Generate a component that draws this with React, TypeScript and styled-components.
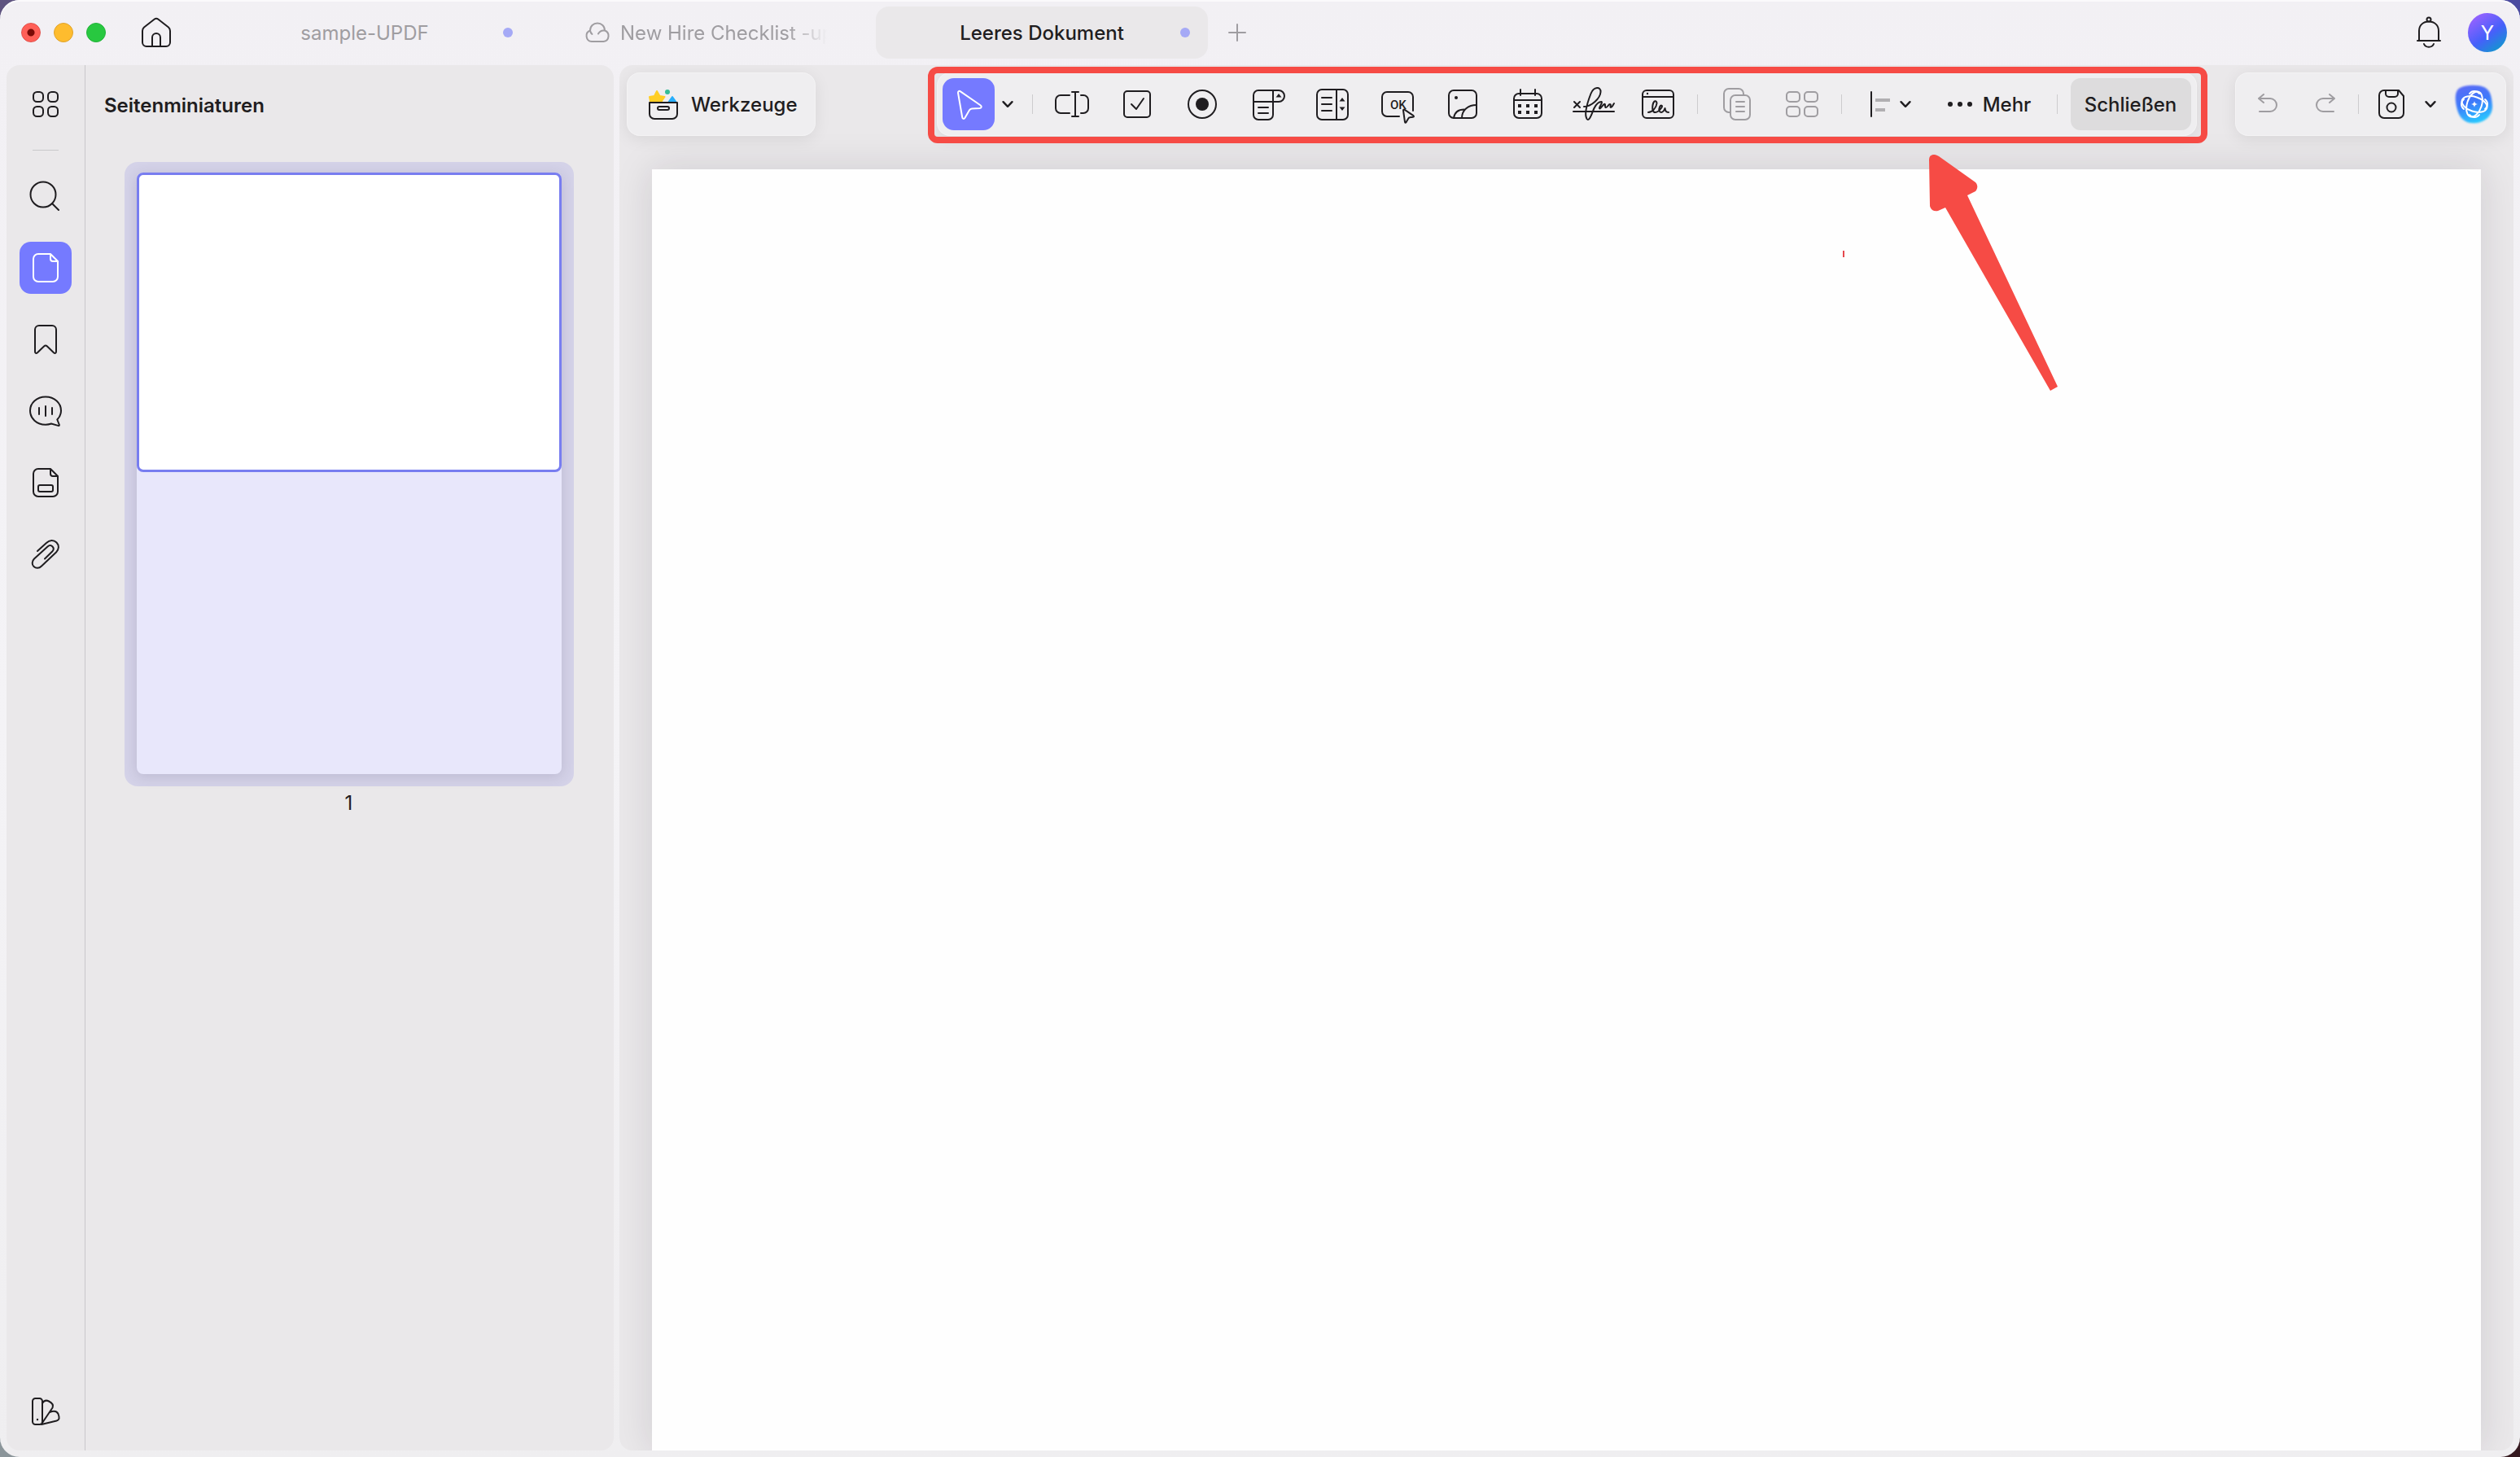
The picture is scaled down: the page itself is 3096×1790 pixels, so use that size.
import React from 'react';
import styled, { createGlobalStyle, css } from 'styled-components';

const ink = '#1f1d20';
const muted = '#9f9da1';
const accent = '#757aff';
const red = '#f64b45';

const GlobalStyle = createGlobalStyle`
  * { box-sizing: border-box; }
  body {
    margin: 0;
    background:
      linear-gradient(90deg, #5f5480, #4b4ba0) top / 100% 50% no-repeat,
      linear-gradient(90deg, #8b959a, #35191f) bottom / 100% 50% no-repeat;
    font-family: Inter, "Liberation Sans", sans-serif;
    font-size: 24px;
    line-height: 32px;
    color: ${ink};
  }
  button { font: inherit; color: inherit; border: 0; padding: 0; background: none; }
`;

const Window = styled.div`
  height: 100vh;
  display: flex;
  flex-direction: column;
  overflow: hidden;
  border-radius: 24px;
  background: linear-gradient(#f2f0f4, #f4f3f6 50%, #efeef0);
  box-shadow: inset 0 2px 0 #fbfafc;
`;

const TitleBar = styled.header`
  display: flex;
  align-items: center;
  flex: none;
  height: 80px;
  padding: 0 16px 0 26px;
`;

const Lights = styled.div`
  display: flex;
  gap: 16px;
  margin-right: 34px;
`;

const Light = styled.button<{ $color: string; $edge: string; $dot?: boolean }>`
  width: 24px;
  height: 24px;
  border-radius: 50%;
  border: 1px solid ${p => p.$edge};
  background: ${p => (p.$dot ? `radial-gradient(#7a0a06 0 4px, ${p.$color} 5px)` : p.$color)};
`;

const IconButton = styled.button<{ $w?: number; $active?: boolean }>`
  display: flex;
  align-items: center;
  justify-content: center;
  flex: none;
  width: ${p => p.$w ?? 64}px;
  height: 64px;
  border-radius: ${p => (p.$active ? 14 : 0)}px;
  background: ${p => (p.$active ? accent : 'none')};
  color: ${p => (p.$active ? '#fff' : ink)};
  &:disabled { color: ${muted}; }
`;

const Label = styled.span`
  display: block;
  padding-top: 2px;
  white-space: nowrap;
`;

const Tabs = styled.div`
  display: flex;
  gap: 8px;
  flex: 1;
  margin-left: 24px;
`;

const Tab = styled.button<{ $active?: boolean }>`
  display: grid;
  grid-template-columns: 48px minmax(0, 1fr) 48px;
  align-items: center;
  justify-items: center;
  width: 408px;
  height: 64px;
  padding: 0 4px;
  border-radius: 16px;
  color: ${p => (p.$active ? ink : muted)};
  background: ${p => (p.$active ? '#eae8ea' : 'none')};
  font-weight: ${p => (p.$active ? 500 : 400)};
`;

const CloudTab = styled(Tab)`
  display: flex;
  gap: 10px;
  padding: 0 56px;
`;

const Fading = styled(Label)`
  mask-image: linear-gradient(90deg, #000 205px, transparent 254px);
`;

const Dot = styled.span`
  width: 12px;
  height: 12px;
  border-radius: 50%;
  background: #a5a9f6;
`;

const Avatar = styled.button`
  width: 48px;
  height: 48px;
  margin-left: 16px;
  border-radius: 50%;
  color: #fff;
  background: linear-gradient(145deg, #9a62ff 10%, #4660fa 55%, #0aa0c8 95%);
`;

const Body = styled.div`
  display: flex;
  flex: 1;
  min-height: 0;
  gap: 7px;
  padding: 0 8px 8px;
`;

const panel = css`
  border-radius: 16px;
  background: #eae8ea;
  overflow: hidden;
`;

const SidePanel = styled.aside`
  ${panel}
  display: flex;
  width: 746px;
  flex: none;
`;

const Rail = styled.nav`
  display: flex;
  flex-direction: column;
  align-items: center;
  gap: 24px;
  width: 97px;
  padding: 16px 0;
  border-right: 1px solid #c9c8cb;
`;

const RailRule = styled.hr`
  width: 32px;
  height: 1px;
  margin: 0;
  border: 0;
  background: #c9c8cb;
`;

const RailEnd = styled.div`
  margin-top: auto;
`;

const Thumbs = styled.section`
  display: flex;
  flex-direction: column;
  flex: 1;
  align-items: center;
  padding: 32px 49px 0 23px;
`;

const Heading = styled.h2`
  align-self: flex-start;
  margin: 0 0 53px;
  font-size: 24px;
  line-height: 32px;
  font-weight: 600;
`;

const ThumbCard = styled.button`
  width: 552px;
  height: 767px;
  margin-left: 24px;
  padding: 13px 15px 15px;
  border-radius: 16px;
  background: #d4d2e8;
`;

const ThumbPage = styled.span`
  display: block;
  height: 100%;
  border-radius: 8px;
  background: #e8e7fb;
  box-shadow: 0 3px 16px rgba(60, 55, 90, 0.16);
`;

const ThumbView = styled.span`
  display: block;
  height: 368px;
  border: 3px solid #787df0;
  border-radius: 8px;
  background: #fff;
`;

const PageNumber = styled.div`
  margin: 5px 0 0 24px;
`;

const Main = styled.main`
  ${panel}
  display: flex;
  flex-direction: column;
  flex: 1;
  min-width: 0;
  padding: 9px 9px 0;
`;

const ToolRow = styled.div`
  display: grid;
  grid-template-columns: 1fr auto 1fr;
  position: relative;
  z-index: 1;
`;

const Card = styled.div`
  display: flex;
  align-items: center;
  height: 78px;
  padding: 7px;
  border-radius: 16px;
  background: #efeef0;
  box-shadow: 0 4px 20px rgba(0, 0, 0, 0.08), inset 0 0 0 1px rgba(255, 255, 255, 0.3);
`;

const StartCard = styled(Card)` justify-self: start; `;
const EndCard = styled(Card)` justify-self: end; `;
const FormBar = styled(Card)` position: relative; `;

const ToolsButton = styled.button`
  display: flex;
  align-items: center;
  gap: 15px;
  width: 218px;
  height: 64px;
  padding-left: 19px;
  font-weight: 500;
`;

const AlignButton = styled.button`
  display: flex;
  align-items: center;
  width: 90px;
  height: 64px;
  padding-left: 15px;
`;

const MoreButton = styled.button`
  display: flex;
  align-items: center;
  justify-content: center;
  gap: 12px;
  width: 158px;
  height: 64px;
  padding-left: 8px;
  font-weight: 500;
`;

const CloseButton = styled.button`
  width: 148px;
  height: 64px;
  border-radius: 12px;
  background: #dddcdd;
  font-weight: 500;
`;

const Rule = styled.span<{ $before?: number; $after?: number }>`
  width: 1px;
  height: 24px;
  flex: none;
  margin: 0 ${p => p.$after ?? 8}px 0 ${p => p.$before ?? 8}px;
  background: #cdccce;
`;

const Highlight = styled.div`
  position: absolute;
  inset: -7px -13px -9px -11px;
  border: 8px solid ${red};
  border-radius: 12px;
  pointer-events: none;
`;

const Arrow = styled.svg`
  position: absolute;
  left: 1219px;
  top: 101px;
  pointer-events: none;
`;

const Canvas = styled.div`
  position: relative;
  flex: 1;
  margin: 41px 31px 0;
  background: #fefefe;
  box-shadow: 0 0 44px rgba(30, 20, 40, 0.13);
`;

const Caret = styled.span`
  position: absolute;
  left: 1463px;
  top: 100px;
  width: 2px;
  height: 8px;
  background: #e5484d;
`;

const Glyph = styled.svg`
  display: block;
  flex: none;
  overflow: visible;
  fill: none;
  stroke: currentColor;
  stroke-width: 2;
  stroke-linecap: round;
  stroke-linejoin: round;
`;

const Solid = styled.g`
  fill: currentColor;
  stroke: none;
`;

const Icon = ({ size = 48, children }: { size?: number; children: React.ReactNode }) => (
  <Glyph width={size} height={size} viewBox="0 0 48 48" aria-hidden="true">{children}</Glyph>
);

const Chevron = () => (
  <Glyph width="14" height="8" viewBox="0 0 14 8" aria-hidden="true"><path strokeWidth="2.4" d="M1.5 1.2 7 6.8l5.500-5.600" /></Glyph>
);

const GridIcon = () => (
  <Icon>
    <rect x="9" y="9" width="12" height="12" rx="4.500" /><rect x="27" y="9" width="12" height="12" rx="4.500" />
    <rect x="9" y="27" width="12" height="12" rx="4.500" /><rect x="27" y="27" width="12" height="12" rx="4.500" />
  </Icon>
);

const pageOutline = 'M15 7h15l9 9v19a6 6 0 0 1-6 6H15a6 6 0 0 1-6-6V13a6 6 0 0 1 6-6ZM30 7v6a3 3 0 0 0 3 3h6';

const railIcons: { label: string; active?: boolean; art: React.ReactNode }[] = [
  { label: 'Suche', art: <><circle cx="21" cy="22" r="15.500" /><path d="m32 33 8 8" /></> },
  { label: 'Seitenminiaturen', active: true, art: <path d={pageOutline} /> },
  { label: 'Lesezeichen', art: <path d="M11 39V12a5 5 0 0 1 5-5h16a5 5 0 0 1 5 5v27c0 2-1.500 2.500-3 1.200L26 32.500c-1.300-1.200-2.700-1.200-4 0l-8 7.700c-1.500 1.300-3 .8-3-1.200Z" /> },
  { label: 'Kommentare', art: <><path d="M24 6.500c11 0 19 7.500 19 17 0 4.500-1.700 8-4.700 11l2.400 6c.4 1.200-.2 1.700-1.400 1.400L31 39.500c-2.300.8-4.500 1.200-7 1.200-11 0-19-7.700-19-17.200s8-17 19-17Z" /><path d="M16 20v8M24 18v12M32 20v8" /></> },
  { label: 'Felder', art: <><path d={pageOutline} /><rect x="15" y="27" width="18" height="8" rx="2" /></> },
  { label: 'Anhänge', art: <path d="m14 20 11-10c4-4 9-4 12.500-.5s3 8.500-.5 12L19 38.500c-3 3-7 3-9.500.5s-2.500-6.500.5-9.500l16.500-15c2-1.800 4.300-1.800 6 0s1.600 4-.3 6L23 29.500" /> },
];

const fieldIcons: { label: string; art: React.ReactNode }[] = [
  { label: 'Textfeld', art: <path d="M21 13H10a6 6 0 0 0-6 6v10a6 6 0 0 0 6 6h11M35 13h3a6 6 0 0 1 6 6v10a6 6 0 0 1-6 6h-3M28 9v30M24 9h8M24 39h8" /> },
  { label: 'Kontrollkästchen', art: <><rect x="8" y="8" width="32" height="32" rx="4" /><path d="m17 24 6 6 9-13" /></> },
  { label: 'Optionsfeld', art: <><circle cx="24" cy="24" r="17" /><Solid><circle cx="24" cy="24" r="8" /></Solid></> },
  { label: 'Dropdown', art: <><path d="M31 7v30a6 6 0 0 1-6 6H13a6 6 0 0 1-6-6V13a6 6 0 0 1 6-6h25a7 7 0 0 1 0 14H7M13 28h12M13 35h12" /><Solid><path d="m38 11 3.500 4.500h-7Z" /></Solid></> },
  { label: 'Listenfeld', art: <><rect x="5" y="6" width="38" height="37" rx="6" /><path d="M29 6v37M11 16h12M11 24h12M11 32h12" /><Solid><path d="m36 16 3.500 4.500h-7ZM36 32l3.500-4.500h-7Z" /></Solid></> },
  { label: 'Schaltfläche', art: <><path d="M26 39H11a6 6 0 0 1-6-6V15a6 6 0 0 1 6-6h26a6 6 0 0 1 6 6v17" /><Solid><text x="15" y="30" fontSize="15" fontWeight="500" fontFamily="Roboto, sans-serif">OK</text></Solid><path fill="#efeef0" d="M31 31.500c0-1 .7-1.300 1.500-.8l11 7.500c.9.700.6 1.500-.5 1.600l-4 .4c-.6 0-1 .4-1.400.9l-3 5c-.6.900-1.400.800-1.600-.3Z" /></> },
  { label: 'Bild', art: <><rect x="7" y="7" width="34" height="34" rx="6" /><path d="M23 41c0-10 8-16 18-16M13 41c1-7 6-10.500 13-10.500" /><Solid><circle cx="16" cy="16" r="2" /></Solid></> },
  { label: 'Datum', art: <><rect x="7" y="11" width="34" height="30" rx="6" /><path d="M7 19h34M15 6v7M33 6v7" /><Solid>{[12, 22, 32].map(x => [24, 32].map(y => <rect key={`${x}-${y}`} x={x} y={y} width="4" height="4" />))}</Solid></> },
  { label: 'Signatur', art: <path d="m1 21 7 7M8 21l-7 7M0 33h50M13 27c9 0 20-10 20.500-18C34 2 25 2 21.500 11 18 20 13 36 16.500 42c3 4 6-6 9-13 3-6 6-8 9-8 2 1-3 6-2.500 8s4-4 6-5 0 4 2 4 3-4 5-4-.5 4 1 4 2-2 4-5" /> },
  { label: 'Digitale Signatur', art: <><rect x="5" y="7" width="38" height="34" rx="5" /><path d="M5 15h38M12 34c5 0 10-6 10.500-11 0-4-4-4-5 2-.8 5 0 9 3 9s6-3 8-6c1.500-2.500-1-3.500-2.500-.5-1.500 4-.5 6.500 2 6.500s3.500-2.500 4.500-5c.5 3 1 5 4.500 5" /><Solid><circle cx="11" cy="11" r="1.200" /></Solid></> },
];

const AssistantIcon = () => (
  <Glyph width="48" height="48" viewBox="0 0 48 48" aria-hidden="true">
    <defs>
      <linearGradient id="aiFill" x1=".3" y1="0" x2=".6" y2="1">
        <stop offset="0" stopColor="#5a6cf6" /><stop offset=".45" stopColor="#3d79fa" /><stop offset="1" stopColor="#28ccff" />
      </linearGradient>
      <filter id="aiSoft"><feGaussianBlur stdDeviation="1" /></filter>
    </defs>
    <path d="M6 4C14 0 28 0 36 3c8 4 9 12 10 22s-6 20-19 22C14 49 6 42 3 31 0 20-1 8 6 4Z" fill="url(#aiFill)" stroke="none" filter="url(#aiSoft)" />
    <g stroke="#fff">
      <ellipse cx="24" cy="24" rx="16" ry="9" transform="rotate(18 24 24)" />
      <ellipse cx="24" cy="24" rx="16" ry="9" transform="rotate(108 24 24)" transform-origin="0 0" />
      <path fill="#fff" stroke="none" d="M24 20c.6 2.800 1.200 3.400 4 4-2.800.6-3.400 1.200-4 4-.6-2.800-1.200-3.400-4-4 2.800-.6 3.400-1.200 4-4Z" />
      {[0, 90, 180, 270].map(a => (
        <path key={a} transform={`rotate(${a} 24 24)`} d="M18 11c3-4 9-4 12 0" />
      ))}
    </g>
  </Glyph>
);

export default function App() {
  return (
    <>
      <GlobalStyle />
      <Window>
        <TitleBar>
          <Lights>
            <Light aria-label="Fenster schließen" $color="#ff5f57" $edge="#e2504a" $dot />
            <Light aria-label="Minimieren" $color="#febc2e" $edge="#e0a32a" />
            <Light aria-label="Vergrößern" $color="#28c840" $edge="#24b33a" />
          </Lights>
          <IconButton $w={56} aria-label="Startseite">
            <Icon><path d="M12 41a5 5 0 0 1-5-5V22c0-2 .5-3.200 2-4.500L21.500 7.800c1.500-1.200 3.500-1.200 5 0L39 17.500c1.500 1.300 2 2.500 2 4.500v14a5 5 0 0 1-5 5ZM19 41V30a5 5 0 0 1 10 0v11" /></Icon>
          </IconButton>
          <Tabs role="tablist">
            <Tab role="tab"><span /><Label>sample-UPDF</Label><Dot /></Tab>
            <CloudTab role="tab">
              <Glyph width="36" height="32" viewBox="0 0 36 32" aria-hidden="true"><path d="M11 27a7 7 0 0 1-2-13.500C9 8 13 4.500 18 4.500S27 8 27 13.500A7 7 0 0 1 25.500 27ZM9 13.500c.3 2 1 3.300 2.500 4.500M27 13.500c-3.500-.5-6.500 1-8 4" /></Glyph>
              <Fading>New Hire Checklist -up</Fading>
            </CloudTab>
            <Tab role="tab" aria-selected="true" $active><span /><Label>Leeres Dokument</Label><Dot /></Tab>
            <IconButton $w={56} disabled aria-label="Neuer Tab"><Icon><path d="M24 14v20M14 24h20" /></Icon></IconButton>
          </Tabs>
          <IconButton $w={64} aria-label="Benachrichtigungen">
            <Icon><circle cx="24" cy="8" r="2.500" /><path d="M12 34V22c0-7 5-11.500 12-11.500S36 15 36 22v12M10 34h28M18 38c2 5 10 5 12 0" /></Icon>
          </IconButton>
          <Avatar aria-label="Konto"><Label>Y</Label></Avatar>
        </TitleBar>

        <Body>
          <SidePanel>
            <Rail>
              <IconButton aria-label="Übersicht"><GridIcon /></IconButton>
              <RailRule />
              {railIcons.map(r => (
                <IconButton key={r.label} aria-label={r.label} $active={r.active}><Icon>{r.art}</Icon></IconButton>
              ))}
              <RailEnd>
                <IconButton aria-label="Design">
                  <Icon><rect x="8" y="8" width="12" height="32" rx="3.500" /><path d="M20 14c2-3.500 5-4 8-2.500 4 2 6 4.500 4.500 8L20 38M29 25c5-2 9-1.500 10.500 2 2 5 1.500 7.500-2 8.500L19 40" /><Solid><circle cx="14" cy="34" r="1.200" /></Solid></Icon>
                </IconButton>
              </RailEnd>
            </Rail>
            <Thumbs>
              <Heading><Label>Seitenminiaturen</Label></Heading>
              <ThumbCard aria-label="Seite 1"><ThumbPage><ThumbView /></ThumbPage></ThumbCard>
              <PageNumber>1</PageNumber>
            </Thumbs>
          </SidePanel>

          <Main>
            <ToolRow>
              <StartCard>
                <ToolsButton>
                  <Glyph width="38" height="40" viewBox="0 0 38 40" aria-hidden="true">
                    <path fill="#ffce24" stroke="#ffce24" d="m11 4 3.500 6 6 1-3.500 5v5H4l-1-5-1-5 6-1Z" />
                    <circle cx="24" cy="5" r="3" fill="#35bd98" stroke="none" />
                    <path fill="#28aefb" stroke="#28aefb" d="m30 11 5 7H25Z" />
                    <path fill="#efeef0" d="M2 18h34v14a6 6 0 0 1-6 6H8a6 6 0 0 1-6-6Z" />
                    <rect x="12" y="23" width="14" height="4" rx="2" />
                  </Glyph>
                  <Label>Werkzeuge</Label>
                </ToolsButton>
              </StartCard>

              <FormBar role="toolbar" aria-label="Formular">
                <IconButton $active aria-label="Auswählen">
                  <Icon><path d="M11 10c0-2 1.300-2.700 3-1.600l24.500 16.800c2 1.500 1.500 3.500-.8 3.700l-9.700.6c-1.500.1-2.300.6-3 1.800l-5.500 9.400c-1.200 1.900-3 1.500-3.300-.7Z" /></Icon>
                </IconButton>
                <IconButton $w={32} aria-label="Auswahlmodus"><Chevron /></IconButton>
                <Rule $before={14} />
                {fieldIcons.map(f => (
                  <IconButton key={f.label} $w={80} aria-label={f.label}><Icon>{f.art}</Icon></IconButton>
                ))}
                <Rule />
                <IconButton $w={80} disabled aria-label="Duplizieren">
                  <Icon><rect x="16" y="13" width="24" height="30" rx="6" /><path d="M16 34h-2a6 6 0 0 1-6-6V11a6 6 0 0 1 6-6h12a6 6 0 0 1 6 6v2M23 21h10M23 27h10M23 33h10" /></Icon>
                </IconButton>
                <IconButton $w={80} disabled aria-label="Verteilen">
                  <Icon>{[5, 27].map(x => [9, 27].map(y => <rect key={`${x}-${y}`} x={x} y={y} width="16" height="12" rx="4" />))}</Icon>
                </IconButton>
                <Rule />
                <AlignButton aria-label="Ausrichten">
                  <Icon><path d="M13 9v30" /><path stroke="#b1afb2" strokeWidth="4" strokeLinecap="butt" d="M18 19h18M18 31h12" /></Icon>
                  <Chevron />
                </AlignButton>
                <MoreButton>
                  <Glyph width="32" height="8" viewBox="0 0 32 8" aria-hidden="true"><Solid><circle cx="4" cy="4" r="3" /><circle cx="16" cy="4" r="3" /><circle cx="28" cy="4" r="3" /></Solid></Glyph>
                  <Label>Mehr</Label>
                </MoreButton>
                <Rule $after={16} />
                <CloseButton><Label>Schließen</Label></CloseButton>
                <Highlight />
                <Arrow width="160" height="292" viewBox="0 0 160 292" fill={red} aria-hidden="true">
                  <path d="M0 6C0 0 6-2 12 2l45 32c4 4 2 9 0 11l-10 5 111 235-9 5L20 65l-9 4c-5 1-9-1-10-6Z" />
                </Arrow>
              </FormBar>

              <EndCard>
                <IconButton $w={66} disabled aria-label="Rückgängig">
                  <Icon><path d="M14 17h13a8 8 0 0 1 0 16H14M19 12l-6 5 6 5" /></Icon>
                </IconButton>
                <IconButton $w={76} disabled aria-label="Wiederholen">
                  <Icon><path d="M34 17H21a8 8 0 0 0 0 16h13M29 12l6 5-6 5" /></Icon>
                </IconButton>
                <Rule $before={2} $after={14} />
                <IconButton $w={52} aria-label="Speichern">
                  <Icon><path d="M15 7h18l6 7v21a6 6 0 0 1-6 6H15a6 6 0 0 1-6-6V13a6 6 0 0 1 6-6ZM17 7v4a4 4 0 0 0 4 4h7a4 4 0 0 0 4-4V7" /><circle cx="24" cy="28" r="5.500" /></Icon>
                </IconButton>
                <IconButton $w={44} aria-label="Speicheroptionen"><Chevron /></IconButton>
                <IconButton aria-label="Assistent"><AssistantIcon /></IconButton>
              </EndCard>
            </ToolRow>
            <Canvas><Caret /></Canvas>
          </Main>
        </Body>
      </Window>
    </>
  );
}
